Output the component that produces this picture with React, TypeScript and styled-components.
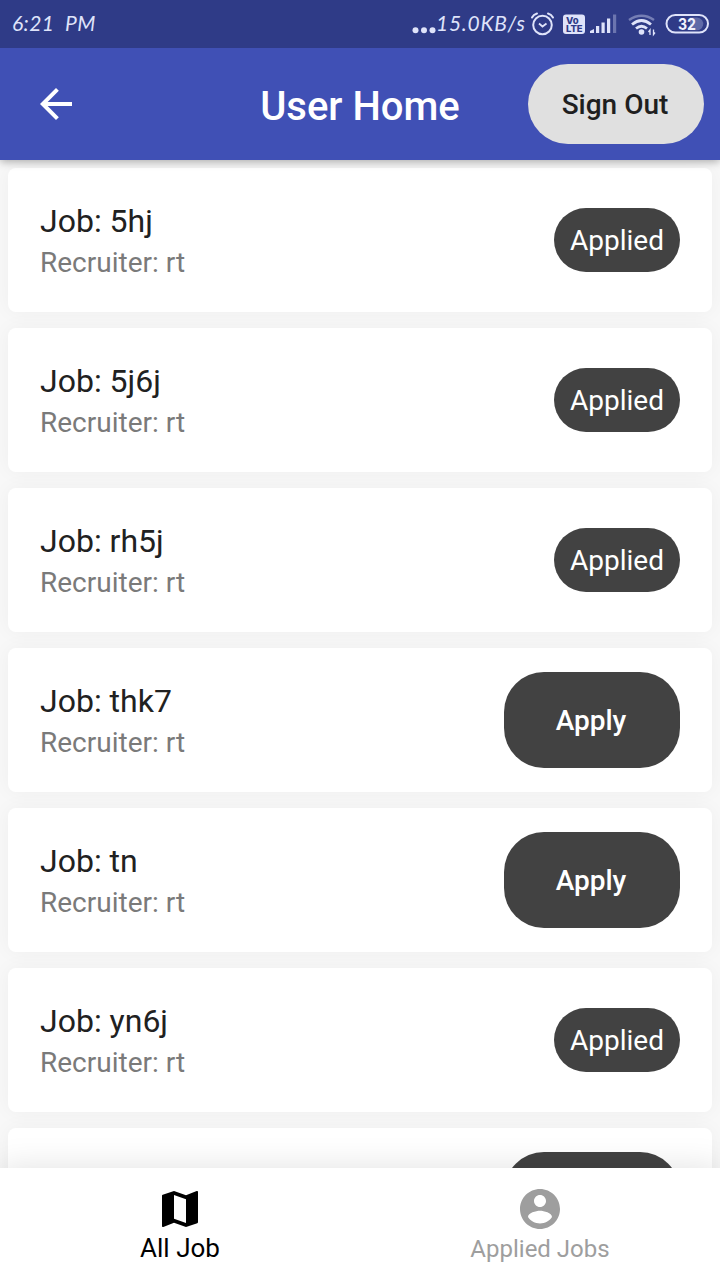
import React from 'react';
import styled, { createGlobalStyle } from 'styled-components';

const Global = createGlobalStyle`
  * { box-sizing: border-box; }
  body { margin: 0; background: #fafafa; font-family: Roboto, "Liberation Sans", sans-serif; }
`;

const Screen = styled.div`
  width: 720px;
  height: 1280px;
  display: flex;
  flex-direction: column;
  overflow: hidden;
  background: #f8f8f8;
`;

const StatusBar = styled.div`
  flex: none;
  height: 48px;
  padding: 0 11px 0 12px;
  display: flex;
  align-items: center;
  background: #2f3b87;
  color: #dfe3fa;
  z-index: 2;
`;

const StatusText = styled.span<{ $width: number; $spacing: number }>`
  width: ${(p) => p.$width}px;
  padding-bottom: 3px;
  font: italic 400 21px Lato, sans-serif;
  letter-spacing: ${(p) => p.$spacing}px;
  white-space: pre;
`;

const Spacer = styled.div`
  flex: 1;
`;

const AppBar = styled.header`
  flex: none;
  height: 112px;
  padding: 0 16px 0 32px;
  display: grid;
  grid-template-columns: 176px 1fr 176px;
  column-gap: 16px;
  align-items: center;
  background: #4050b5;
  color: #fff;
  box-shadow: 0 2px 8px rgba(0, 0, 0, 0.3);
  z-index: 1;
`;

const Title = styled.h1`
  margin: 5px 0 0;
  text-align: center;
  font-size: 40px;
  font-weight: 500;
  line-height: 48px;
  padding-right: 16px;
  white-space: nowrap;
`;

const SignOut = styled.button`
  height: 80px;
  padding: 0 2px 0 0;
  border: 0;
  border-radius: 40px;
  background: #e0e0e0;
  color: #1f1f1f;
  font: 500 28px Roboto, sans-serif;
  white-space: nowrap;
`;

const List = styled.main`
  flex: 1;
  min-height: 0;
  overflow: hidden;
  padding: 8px;
  display: flex;
  flex-direction: column;
  gap: 16px;
`;

const Card = styled.article`
  flex: none;
  height: 144px;
  padding: 0 32px;
  display: flex;
  align-items: center;
  justify-content: space-between;
  background: #fff;
  border-radius: 8px;
  box-shadow: 0 0 20px rgba(0, 0, 0, 0.045);
`;

const JobText = styled.div`
  padding-top: 2px;
`;

const JobTitle = styled.div`
  font-size: 32px;
  line-height: 44px;
  color: #212121;
`;

const Recruiter = styled.div`
  font-size: 28px;
  line-height: 40px;
  color: #7a7a7a;
`;

const Chip = styled.span`
  width: 126px;
  height: 64px;
  display: flex;
  align-items: center;
  justify-content: center;
  border-radius: 32px;
  background: #424242;
  color: #fff;
  font-size: 28px;
`;

const ApplyButton = styled.button`
  width: 176px;
  height: 96px;
  padding: 0 2px 0 0;
  border: 0;
  border-radius: 40px;
  background: #424242;
  color: #fff;
  font: 500 28px Roboto, sans-serif;
`;

const BottomNav = styled.nav`
  flex: none;
  height: 112px;
  display: grid;
  grid-template-columns: 1fr 1fr;
  background: #fff;
  box-shadow: 0 0 32px rgba(0, 0, 0, 0.12);
  z-index: 1;
`;

const NavItem = styled.div<{ $active?: boolean }>`
  padding-top: 17px;
  display: flex;
  flex-direction: column;
  align-items: center;
  color: ${(p) => (p.$active ? '#000' : '#9e9e9e')};
  font-size: ${(p) => (p.$active ? 26 : 24)}px;
  line-height: ${(p) => (p.$active ? 30 : 32)}px;
`;

const MaterialIcon = ({ d }: { d: string }) => (
  <svg width="48" height="48" viewBox="0 0 24 24" fill="currentColor">
    <path d={d} />
  </svg>
);

const ARROW = 'M20 11H7.83l5.59-5.59L12 4l-8 8 8 8 1.41-1.41L7.83 13H20v-2z';
const MAP =
  'M20.5 3l-.16.03L15 5.1 9 3 3.36 4.9c-.21.07-.36.25-.36.48V20.500c0 .28.22.5.5.5l.16-.03L9 18.9l6 2.1 5.64-1.900c.21-.07.36-.25.36-.48V3.500c0-.28-.22-.5-.5-.5zM15 19l-6-2.110V5l6 2.110V19z';
const ACCOUNT =
  'M12 2C6.480 2 2 6.480 2 12s4.480 10 10 10 10-4.480 10-10S17.520 2 12 2zm0 3c1.660 0 3 1.340 3 3s-1.340 3-3 3-3-1.340-3-3 1.340-3 3-3zm0 14.200c-2.500 0-4.710-1.280-6-3.220.03-1.990 4-3.080 6-3.080 1.990 0 5.970 1.090 6 3.080-1.290 1.940-3.500 3.220-6 3.220z';

const StatusIcons = () => (
  <svg width="180" height="48" viewBox="529 0 180 48" fill="none" stroke="#dfe3fa">
    <circle cx="542.500" cy="25" r="9.300" strokeWidth="2" />
    <path d="M539 23.500l3.500 3 4-3" strokeWidth="1.800" />
    <path d="M532 17.500q1.500-3 5-4M548 13.500q3.500 1 5 4" strokeWidth="2" strokeLinecap="round" />
    <rect x="563" y="14.500" width="22" height="19.500" rx="3" fill="#dfe3fa" stroke="none" />
    <g fill="#2f3b87" stroke="none" fontFamily="Inter, sans-serif" fontWeight="800">
      <text x="566" y="23.500" fontSize="9.500">Vo</text>
      <text x="566" y="32.300" fontSize="9.500" textLength="16.500">LTE</text>
    </g>
    <g fill="#dfe3fa" stroke="none">
      <path d="M590 33v-2l4-2v4z" />
      <rect x="596" y="26" width="3.200" height="7" />
      <rect x="601.500" y="22.500" width="3.200" height="10.500" />
      <rect x="607" y="18.500" width="3.200" height="14.500" />
      <rect x="613" y="14.500" width="3.200" height="18.500" opacity=".35" />
      <circle cx="641.500" cy="32" r="2.800" />
    </g>
    <path d="M629 20q12.500-8.500 25 0" strokeWidth="2.500" opacity=".4" />
    <path d="M632 24.500q9.500-8 19 0M636 28.500q5.500-4.500 11 0" strokeWidth="2.800" />
    <path d="M650 35v-5l-1.500 2M653.500 29.500v5l1.500-2" strokeWidth="1.300" />
    <path d="M690 17.500h7a6.300 6.300 0 0 1 6 8q-1.500 4.800-6 4.800h-7z" fill="#5f6aa8" stroke="none" />
    <rect x="666.500" y="15" width="41.500" height="17.500" rx="8.750" strokeWidth="2" />
    <text x="678" y="29.500" fontSize="16" fontFamily="Inter, sans-serif" fontWeight="700" textLength="18" lengthAdjust="spacingAndGlyphs" fill="#f0f2ff" stroke="none">32</text>
  </svg>
);

const Dots = () => (
  <svg width="24" height="48" viewBox="0 0 24 48" fill="#dfe3fa">
    <circle cx="3.500" cy="30.300" r="3" />
    <circle cx="12" cy="30.300" r="3" />
    <circle cx="20.500" cy="30.300" r="3" />
  </svg>
);

const jobs = [
  { name: '5hj', applied: true },
  { name: '5j6j', applied: true },
  { name: 'rh5j', applied: true },
  { name: 'thk7', applied: false },
  { name: 'tn', applied: false },
  { name: 'yn6j', applied: true },
  { name: 'n', applied: false },
];

export default function App() {
  return (
    <Screen>
      <Global />
      <StatusBar>
        <StatusText $width={90} $spacing={0.4}>6:21  PM</StatusText>
        <Spacer />
        <Dots />
        <StatusText $width={93} $spacing={0.75}>15.0KB/s</StatusText>
        <StatusIcons />
      </StatusBar>
      <AppBar>
        <MaterialIcon d={ARROW} />
        <Title>User Home</Title>
        <SignOut>Sign Out</SignOut>
      </AppBar>
      <List>
        {jobs.map((job) => (
          <Card key={job.name}>
            <JobText>
              <JobTitle>Job: {job.name}</JobTitle>
              <Recruiter>Recruiter: rt</Recruiter>
            </JobText>
            {job.applied ? <Chip>Applied</Chip> : <ApplyButton>Apply</ApplyButton>}
          </Card>
        ))}
      </List>
      <BottomNav>
        <NavItem $active>
          <MaterialIcon d={MAP} />
          <span>All Job</span>
        </NavItem>
        <NavItem>
          <MaterialIcon d={ACCOUNT} />
          <span>Applied Jobs</span>
        </NavItem>
      </BottomNav>
    </Screen>
  );
}
